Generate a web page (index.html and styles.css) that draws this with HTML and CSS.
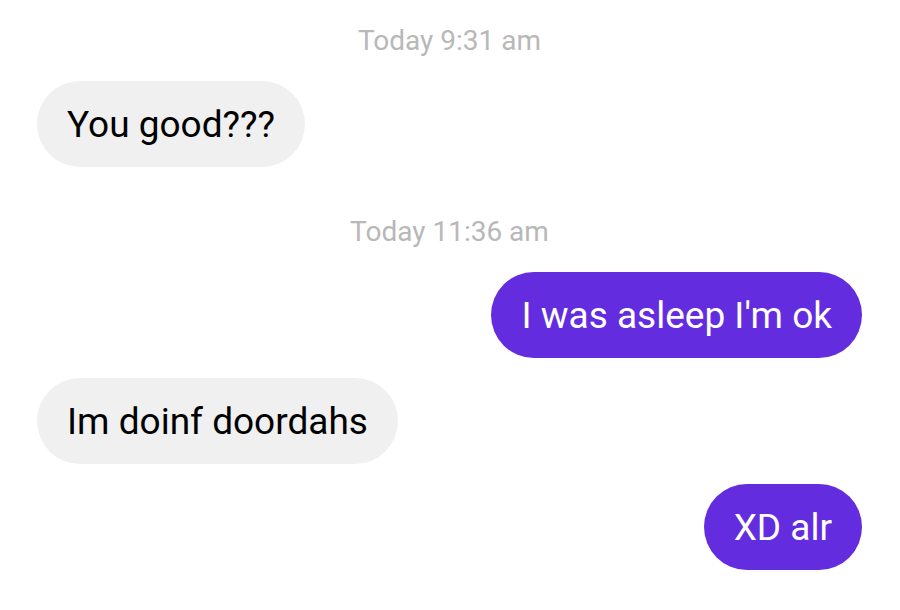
FILE: index.html
```html
<!DOCTYPE html>
<html lang="en">

<head>
  <meta charset="UTF-8">
  <meta name="viewport" content="width=device-width, initial-scale=1.0">
  <title>Messages</title>
  <link rel="stylesheet" href="styles.css">
</head>

<body>

  <div class="thread">
    <div class="stamp first">Today 9:31 am</div>
    <div class="row in">
      <div class="bubble">You good???</div>
    </div>

    <div class="stamp">Today 11:36 am</div>
    <div class="row out">
      <div class="bubble">I was asleep I'm ok</div>
    </div>
    <div class="row in">
      <div class="bubble">Im doinf doordahs</div>
    </div>
    <div class="row out">
      <div class="bubble">XD alr</div>
    </div>
  </div>

</body>

</html>
```

FILE: styles.css
```css
body {
  margin: 0;
  background-color: #fff;
  font-family: 'Roboto', 'Liberation Sans', sans-serif;
}

.thread {
  display: flex;
  flex-direction: column;
  gap: 20px;
  padding: 26px 38px 0 37px;
}

.stamp {
  text-align: center;
  color: #b8b8b8;
  font-size: 28px;
  line-height: 30px;
  margin-top: 30px;
  margin-bottom: 5px;
}

.stamp.first {
  margin-top: 0;
}

.row {
  display: flex;
}

.row.out {
  justify-content: flex-end;
}

.bubble {
  height: 86px;
  line-height: 88px;
  padding: 0 30px;
  border-radius: 43px;
  font-size: 37px;
  box-sizing: border-box;
}

.in .bubble {
  background-color: #f0f0f0;
  color: #000;
}

.out .bubble {
  background-color: #632ddf;
  color: #fff;
}
```
